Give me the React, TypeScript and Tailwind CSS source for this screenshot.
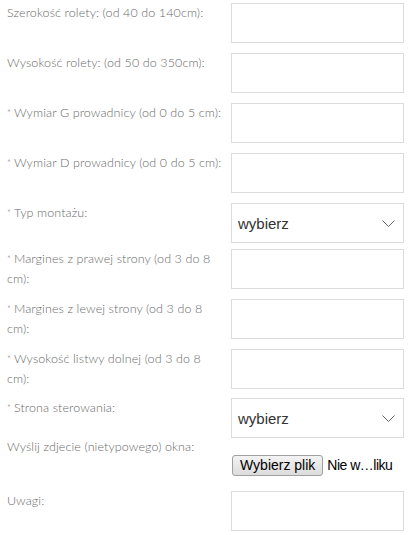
import React from "react";

const labelCls =
  "w-[231px] shrink-0 pl-[7px] text-[12.5px] font-light leading-[20px] text-[#6a6a6a] whitespace-nowrap";
const boxCls = "w-[173px] h-[40px] border border-[#dcdcdc] bg-white";

function Label({ lines, star }: { lines: string[]; star?: boolean }) {
  return (
    <div className={labelCls} style={{ fontFamily: "Lato, 'Open Sans', sans-serif", letterSpacing: "0.1px" }}>
      {lines.map((l, i) => (
        <div key={i}>
          {i === 0 && star ? <span className="text-[9px] align-top mr-[3px]">*</span> : null}
          {l}
        </div>
      ))}
    </div>
  );
}

function Select() {
  return (
    <div className={boxCls + " flex items-center justify-between pl-[6px] pr-[8px]"}>
      <span
        className="text-[15px] text-[#333] pt-[2px]"
        style={{ fontFamily: "'Liberation Sans', Arial, sans-serif" }}
      >
        wybierz
      </span>
      <svg width="13" height="8" viewBox="0 0 13 8" className="mt-[1px]">
        <path d="M0.5 0.5 L6.5 6.5 L12.5 0.5" fill="none" stroke="#555" strokeWidth="0.9" />
      </svg>
    </div>
  );
}

export default function App() {
  return (
    <div className="w-[410px] h-[535px] bg-white pt-[3px] overflow-hidden">
      <div className="flex h-[50px]">
        <Label lines={["Szerokość rolety: (od 40 do 140cm):"]} />
        <div className={boxCls} />
      </div>
      <div className="flex h-[50px]">
        <Label lines={["Wysokość rolety: (od 50 do 350cm):"]} />
        <div className={boxCls} />
      </div>
      <div className="flex h-[50px]">
        <Label star lines={["Wymiar G prowadnicy (od 0 do 5 cm):"]} />
        <div className={boxCls} />
      </div>
      <div className="flex h-[50px]">
        <Label star lines={["Wymiar D prowadnicy (od 0 do 5 cm):"]} />
        <div className={boxCls} />
      </div>
      <div className="flex h-[46px]">
        <Label star lines={["Typ montażu:"]} />
        <Select />
      </div>
      <div className="flex h-[50px]">
        <Label star lines={["Margines z prawej strony (od 3 do 8", "cm):"]} />
        <div className={boxCls} />
      </div>
      <div className="flex h-[50px]">
        <Label star lines={["Margines z lewej strony (od 3 do 8", "cm):"]} />
        <div className={boxCls} />
      </div>
      <div className="flex h-[49px]">
        <Label star lines={["Wysokość listwy dolnej (od 3 do 8", "cm):"]} />
        <div className={boxCls} />
      </div>
      <div className="flex h-[39px]">
        <Label star lines={["Strona sterowania:"]} />
        <Select />
      </div>
      <div className="flex h-[54px]">
        <Label lines={["Wyślij zdjecie (nietypowego) okna:"]} />
        <div
          className="flex items-center mt-[18px] h-[21px] text-[14px] text-black whitespace-nowrap"
          style={{ fontFamily: "'Liberation Sans', Arial, sans-serif" }}
        >
          <button className="h-[21px] px-[7px] ml-[1px] border border-[#a0a0a0] rounded-[3px] bg-gradient-to-b from-[#f3f3f3] to-[#dcdcdc] leading-[19px] text-[14px] text-black">
            Wybierz plik
          </button>
          <span className="ml-[4px] tracking-[-0.5px]">Nie w…liku</span>
        </div>
      </div>
      <div className="flex h-[40px]">
        <Label lines={["Uwagi:"]} />
        <div className={boxCls} />
      </div>
    </div>
  );
}
